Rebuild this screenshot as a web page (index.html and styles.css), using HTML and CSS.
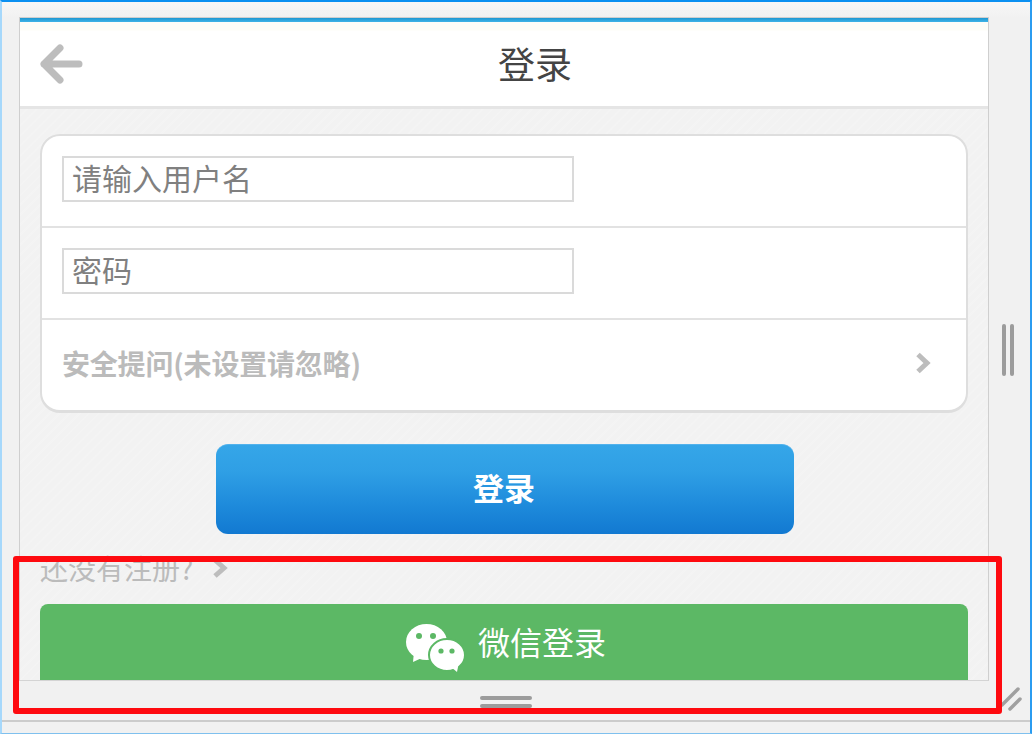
FILE: index.html
```html
<!DOCTYPE html>
<html>
<head>
    <title>登录</title>
    <link rel="stylesheet" href="styles.css">
</head>
<body>
<div class="window">
    <div class="workspace">
        <div class="phone">
            <div class="topLine"></div>
            <div class="header">
                <svg class="back" width="44" height="40" viewBox="0 0 44 40">
                    <path d="M20 4 L4 20 L20 36 M4 20 H39" fill="none" stroke="#bdbdbd" stroke-width="7" stroke-linecap="round" stroke-linejoin="round"/>
                </svg>
                <h1 class="title">登录</h1>
            </div>
            <div class="content">
                <div class="card">
                    <div class="row"><input class="field" type="text" placeholder="请输入用户名"></div>
                    <div class="row"><input class="field" type="text" placeholder="密码"></div>
                    <div class="row rowLink">
                        <span class="question">安全提问(未设置请忽略)</span>
                        <svg width="16" height="22" viewBox="0 0 16 22">
                            <path d="M3 2.5 L12 11 L3 19.5" fill="none" stroke="#bdbdbd" stroke-width="5"/>
                        </svg>
                    </div>
                </div>
                <a class="loginBtn">登录</a>
                <div class="register">
                    <span>还没有注册?</span>
                    <svg width="16" height="20" viewBox="0 0 16 20">
                        <path d="M3 2 L12 10 L3 18" fill="none" stroke="#bdbdbd" stroke-width="5"/>
                    </svg>
                </div>
                <a class="wechatBtn">
                    <svg class="wechatIcon" width="60" height="48" viewBox="0 0 60 48">
                        <ellipse cx="21.5" cy="18" rx="20.5" ry="18" fill="#fff"/>
                        <path d="M9 28 L8 38 L19 33 Z" fill="#fff"/>
                        <circle cx="14" cy="12" r="3" fill="#5cb865"/>
                        <circle cx="28" cy="12" r="3" fill="#5cb865"/>
                        <ellipse cx="42" cy="31" rx="18" ry="16" fill="#fff" stroke="#5cb865" stroke-width="2"/>
                        <path d="M46 43 L52 48 L54 38 Z" fill="#fff"/>
                        <circle cx="36" cy="27" r="2.6" fill="#5cb865"/>
                        <circle cx="47" cy="27" r="2.6" fill="#5cb865"/>
                    </svg>
                    <span>微信登录</span>
                </a>
            </div>
        </div>
        <div class="sideHandle"><i></i><i></i></div>
    </div>
    <div class="bottomHandle"><i></i><i></i></div>
    <div class="statusBar"></div>
    <svg class="grip" width="22" height="26" viewBox="0 0 22 26">
        <path d="M2 19 L18 3 M10 23 L20 13" fill="none" stroke="#a0a0a0" stroke-width="3.5" stroke-linecap="round"/>
    </svg>
    <div class="highlight"></div>
</div>
</body>
</html>
```

FILE: styles.css
```css
html, body {
    width: 100%;
    height: 100%;
    padding: 0px;
    margin: 0px;
    overflow: hidden;
}

body {
    font-family: "Noto Sans CJK SC", "Liberation Sans", sans-serif;
}

.window {
    position: relative;
    box-sizing: border-box;
    width: 1032px;
    height: 734px;
    display: flex;
    flex-direction: column;
    background: linear-gradient(#f7f7f7, #f1f1f1 16px);
    border-top: 2px solid #0b90f1;
    border-left: 2px solid #a6d8fb;
    border-right: 2px solid #2b9cf0;
    border-bottom: 1px solid #7fc0ee;
}

.workspace {
    display: flex;
    padding: 15px 0px 0px 17px;
}

.phone {
    box-sizing: border-box;
    width: 970px;
    height: 664px;
    display: flex;
    flex-direction: column;
    overflow: hidden;
    border: 1px solid #cfcfcf;
    border-bottom-color: #d4d4d4;
    background-color: #f3f3f3;
}

.topLine {
    flex: none;
    height: 4px;
    background: linear-gradient(#1d97d2, #3fb3e6);
}

.header {
    position: relative;
    height: 84px;
    flex: none;
    display: flex;
    align-items: center;
    justify-content: center;
    background: linear-gradient(#fdfdf7 0px, #fdfdf7 8px, #fff 9px);
    border-bottom: 3px solid #e5e5e5;
}

.back {
    position: absolute;
    left: 20px;
    top: 22px;
}

.title {
    margin: 0px 0px 2px 62px;
    font-size: 37px;
    font-weight: normal;
    color: #444;
}

.content {
    padding: 25px 20px 0px;
    background-color: #f2f2f2;
    background-image:
        repeating-linear-gradient(-45deg, rgba(255, 255, 255, 0.12) 0px, rgba(255, 255, 255, 0.12) 2px, transparent 2px, transparent 7px);
}

.card {
    box-sizing: border-box;
    height: 279px;
    background-color: #fff;
    border: 2px solid #dedede;
    border-bottom-width: 3px;
    border-radius: 20px;
}

.row {
    box-sizing: border-box;
    height: 92px;
    padding: 20px;
    border-bottom: 2px solid #e2e2e2;
}

.rowLink {
    height: 90px;
    display: flex;
    align-items: center;
    justify-content: space-between;
    padding: 0px 35px 5px 20px;
    border-bottom: 0px;
}

.field {
    box-sizing: border-box;
    display: block;
    width: 512px;
    height: 46px;
    padding: 0px 8px 5px;
    border: 2px solid #dadada;
    outline: none;
    font-family: inherit;
    font-size: 30px;
    color: #808080;
}

.field::placeholder {
    color: #808080;
    opacity: 1;
}

.question {
    font-size: 28px;
    font-weight: bold;
    letter-spacing: -0.2px;
    color: #bbb;
}

.loginBtn {
    display: block;
    box-sizing: border-box;
    width: 578px;
    height: 90px;
    margin: 31px 0px 0px 176px;
    padding-right: 2px;
    border-radius: 12px;
    background: linear-gradient(#35a6e8 0%, #2f9fe5 30%, #1f8cdc 65%, #1279d1 100%);
    border-top: 1px solid #52b2ec;
    font-size: 31px;
    font-weight: bold;
    line-height: 84px;
    text-align: center;
    color: #fff;
}

.register {
    display: flex;
    align-items: center;
    gap: 19px;
    height: 40px;
    margin-top: 14px;
    font-size: 28px;
    color: #bbb;
}

.wechatBtn {
    display: flex;
    align-items: center;
    justify-content: center;
    gap: 13px;
    height: 90px;
    margin-top: 16px;
    padding: 0px 0px 16px 3px;
    box-sizing: border-box;
    border-radius: 8px;
    background-color: #5cb865;
    font-size: 32px;
    color: #fff;
}

.wechatIcon {
    margin-top: 14px;
}

.sideHandle {
    display: flex;
    gap: 4px;
    margin: 307px 0px 0px 13px;
}

.sideHandle > i {
    width: 4px;
    height: 52px;
    border-radius: 2px;
    background-color: #9c9c9c;
}

.bottomHandle {
    display: flex;
    flex-direction: column;
    align-items: center;
    gap: 4px;
    height: 41px;
    padding-top: 15px;
    box-sizing: border-box;
    padding-right: 20px;
    border-bottom: 2px solid #cccccc;
}

.bottomHandle > i {
    width: 52px;
    height: 4px;
    border-radius: 2px;
    background-color: #9c9c9c;
}

.statusBar {
    flex: 1;
}

.grip {
    position: absolute;
    left: 998px;
    top: 684px;
}

.highlight {
    position: absolute;
    box-sizing: border-box;
    left: 11px;
    top: 554px;
    width: 989px;
    height: 158px;
    border: 6px solid #fe0a0f;
    border-radius: 3px;
}
```
